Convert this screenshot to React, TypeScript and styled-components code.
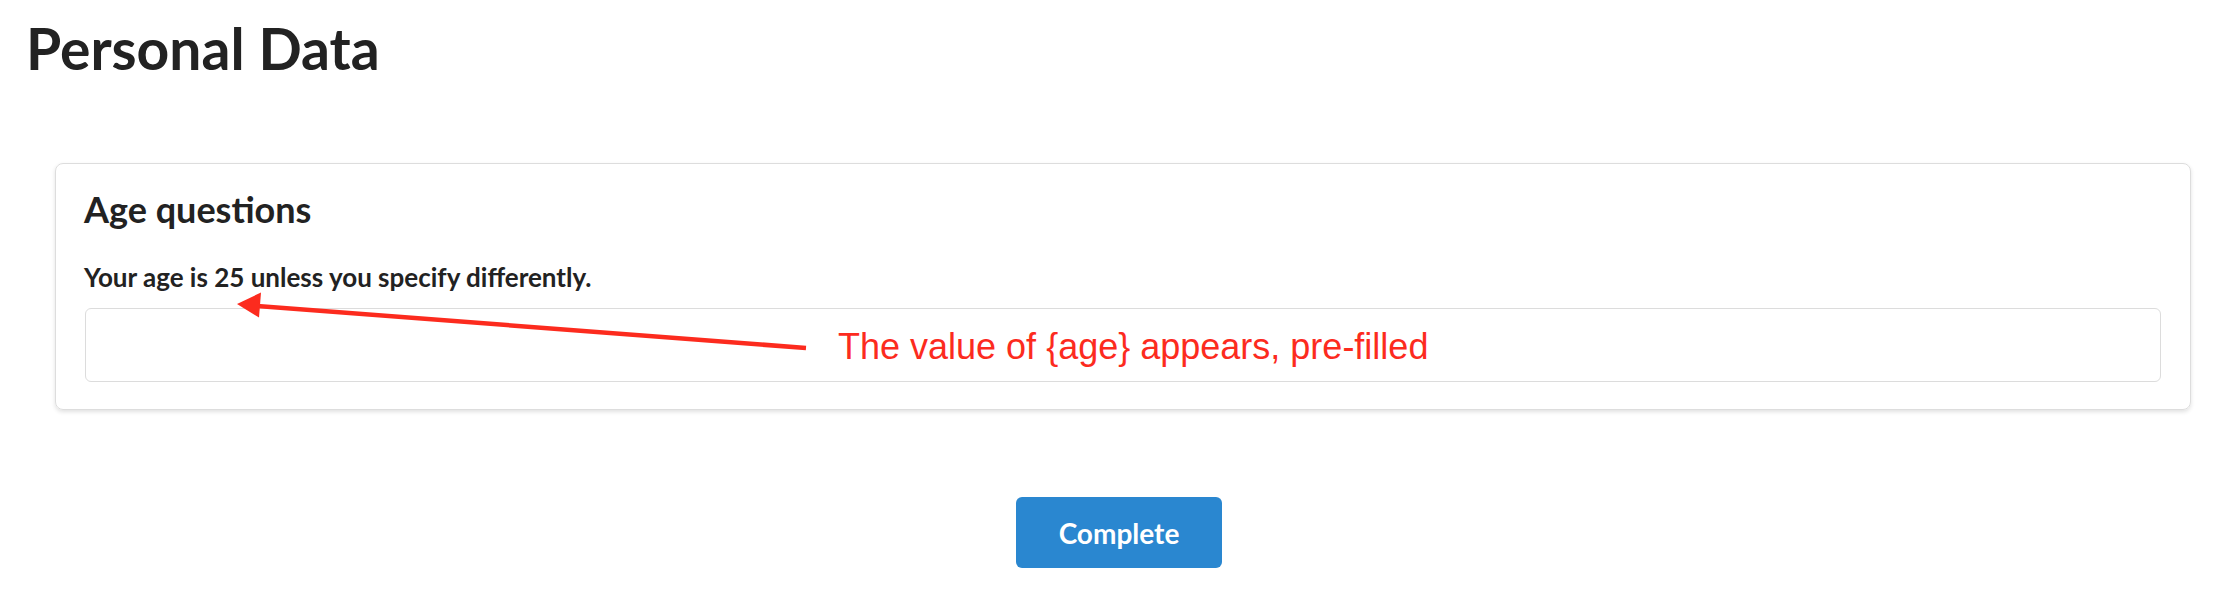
import React from "react";
import styled, { createGlobalStyle } from "styled-components";

const GlobalStyle = createGlobalStyle`
  html, body {
    margin: 0;
    padding: 0;
    background: #ffffff;
  }
  body {
    font-family: Lato, "Open Sans", sans-serif;
    color: #222222;
  }
`;

const Page = styled.div`
  position: relative;
  width: 2238px;
  height: 616px;
  box-sizing: border-box;
  padding: 13px 47px 0 26px;
  display: flex;
  flex-direction: column;
`;

const Title = styled.h1`
  margin: 0;
  font-size: 57px;
  line-height: 70px;
  font-weight: 700;
  color: #222222;
`;

const Card = styled.section`
  margin: 80px 0 0 29px;
  border: 1px solid #dddddd;
  border-radius: 8px;
  box-shadow: 0 2px 4px rgba(0, 0, 0, 0.12);
  padding: 24px 29px 27px 28px;
  display: flex;
  flex-direction: column;
`;

const CardTitle = styled.h2`
  margin: 0;
  font-size: 36px;
  line-height: 42px;
  font-weight: 700;
  color: #222222;
`;

const FieldLabel = styled.label`
  margin-top: 33px;
  font-size: 26px;
  line-height: 29px;
  font-weight: 700;
  color: #222222;
`;

const TextField = styled.div`
  margin-top: 16px;
  margin-left: 1px;
  height: 72px;
  border: 1px solid #dcdcdc;
  border-radius: 6px;
  background: #ffffff;
`;

const Actions = styled.div`
  display: flex;
  justify-content: center;
  margin-top: 87px;
  margin-left: 21px;
`;

const PrimaryButton = styled.button`
  width: 206px;
  height: 71px;
  border: none;
  border-radius: 6px;
  background: #2a87d0;
  color: #ffffff;
  font-family: Lato, "Open Sans", sans-serif;
  font-size: 28px;
  font-weight: 700;
  cursor: pointer;
`;

const Overlay = styled.svg`
  position: absolute;
  left: 0;
  top: 0;
  pointer-events: none;
`;

const Note = styled.span`
  position: absolute;
  left: 838px;
  top: 327px;
  font-family: "Liberation Sans", Arial, sans-serif;
  font-size: 36px;
  line-height: 40px;
  color: #fc2b1e;
  white-space: nowrap;
`;

export default function App() {
  return (
    <>
      <GlobalStyle />
      <Page>
        <Title>Personal Data</Title>
        <Card>
          <CardTitle>Age questions</CardTitle>
          <FieldLabel>Your age is 25 unless you specify differently.</FieldLabel>
          <TextField />
        </Card>
        <Actions>
          <PrimaryButton>Complete</PrimaryButton>
        </Actions>
        <Overlay width="2238" height="616" viewBox="0 0 2238 616">
          <line x1="252" y1="305.5" x2="806" y2="348" stroke="#fc2b1e" strokeWidth="4.5" />
          <polygon points="237,304 261,292.5 259,317.5" fill="#fc2b1e" />
        </Overlay>
        <Note>The value of {"{age}"} appears, pre-filled</Note>
      </Page>
    </>
  );
}
